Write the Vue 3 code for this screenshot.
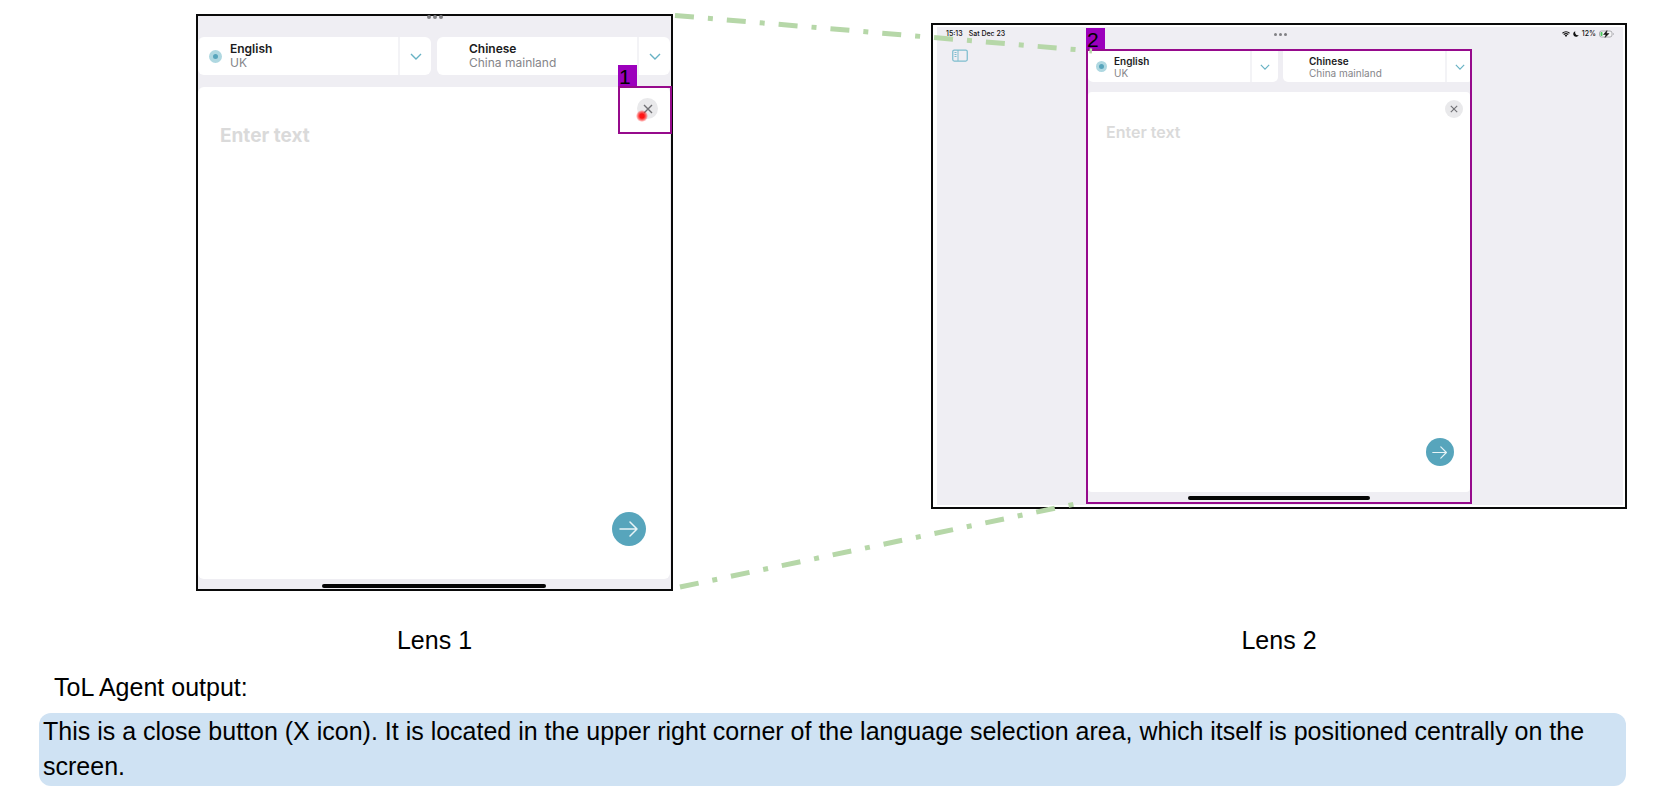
<script setup>
const languages = [
  { name: 'English', region: 'UK', active: true },
  { name: 'Chinese', region: 'China mainland', active: false },
]

const lenses = [
  { id: 1, kind: 'close', caption: 'Lens 1' },
  { id: 2, kind: 'wide', caption: 'Lens 2' },
]
</script>

<template>
  <main class="page">
    <section class="lenses">
      <figure v-for="lens in lenses" :key="lens.id" class="lens" :class="'lens-' + lens.kind">
        <div class="frame">
          <div class="device">
            <header v-if="lens.kind === 'wide'" class="status">
              <div class="status-left"><span>15:13</span><span>Sat Dec 23</span></div>
              <div class="dots"><i></i><i></i><i></i></div>
              <div class="status-right">
                <svg class="wifi" viewBox="0 0 16 12" aria-hidden="true">
                  <path d="M1 4.500C5 .8 11 .8 15 4.500M3.500 7.200c2.600-2.300 6.400-2.300 9 0" fill="none" stroke="#111" stroke-width="2.200" />
                  <path d="M5.500 9.200c1.500-1.300 3.500-1.300 5 0L8 11.800z" fill="#111" />
                </svg>
                <svg class="moon" viewBox="0 0 12 12" aria-hidden="true">
                  <path d="M4.500.5C2 1.500.5 3.600.5 6.200.5 9.300 3 11.600 6 11.600c2.500 0 4.600-1.500 5.500-3.600C7 9.500 3 6 4.500.5z" fill="#111" />
                </svg>
                <span>12%</span>
                <svg class="battery" viewBox="0 0 30 16" aria-hidden="true">
                  <rect x="1" y="2" width="25" height="12" rx="4" fill="#f6f6f8" stroke="#98989c" stroke-width="1.500" />
                  <rect x="3" y="4" width="4" height="8" rx="1.500" fill="#4cc95e" />
                  <path d="M28 6v4c2-1 2-3 0-4z" fill="#98989c" />
                  <path d="M16 1l-7 8h5l-2 6 8-8h-5z" fill="#111" stroke="#111" />
                </svg>
              </div>
            </header>
            <div v-else class="dots"><i></i><i></i><i></i></div>

            <button v-if="lens.kind === 'wide'" class="sidebar" type="button" aria-label="Show sidebar">
              <svg viewBox="0 0 32 26" aria-hidden="true">
                <rect x="1.500" y="2" width="29" height="22" rx="3" fill="none" stroke="#7fbdce" stroke-width="2.500" />
                <path d="M12 2v22M5 7h4M5 11h4M5 15h4" fill="none" stroke="#7fbdce" stroke-width="2" />
              </svg>
            </button>

            <div class="translator">
              <span v-if="lens.kind === 'wide'" class="tag">2</span>
              <div class="content">
                <div class="languages">
                  <div v-for="language in languages" :key="language.name" class="language">
                    <button class="choice" type="button">
                      <span class="radio" :class="{ active: language.active }"></span>
                      <span class="names">
                        <strong>{{ language.name }}</strong>
                        <span>{{ language.region }}</span>
                      </span>
                    </button>
                    <button class="expand" type="button" :aria-label="'Change ' + language.name">
                      <svg viewBox="0 0 12 7" aria-hidden="true">
                        <path d="M1 1l5 5 5-5" fill="none" stroke="#67b2c4" stroke-width="1.400" />
                      </svg>
                    </button>
                  </div>
                </div>

                <div class="panel">
                  <button class="close" type="button" aria-label="Close">
                    <svg viewBox="0 0 10 10" aria-hidden="true">
                      <path d="M1 1l8 8M9 1L1 9" fill="none" stroke="#707074" stroke-width="1.400" />
                    </svg>
                  </button>
                  <textarea class="entry" placeholder="Enter text" aria-label="Enter text"></textarea>
                  <button class="send" type="button" aria-label="Translate">
                    <svg viewBox="0 0 20 16" aria-hidden="true">
                      <path d="M1 8h17M11 1l7 7-7 7" fill="none" stroke="#e8f4f7" stroke-width="1.500" stroke-linecap="round" stroke-linejoin="round" />
                    </svg>
                  </button>
                  <div v-if="lens.kind === 'close'" class="highlight">
                    <span class="tag">1</span>
                    <span class="touch"></span>
                  </div>
                </div>
                <div class="home"></div>
              </div>
            </div>
          </div>
        </div>
        <figcaption>{{ lens.caption }}</figcaption>
      </figure>

      <svg class="links" viewBox="0 0 1661 600" aria-hidden="true">
        <path d="M675 15.500L1092 51" />
        <path d="M680 587L1075 504" />
      </svg>
    </section>

    <section class="output">
      <h2>ToL Agent output:</h2>
      <p>
        This is a close button (X icon). It is located in the upper right corner of the language
        selection area, which itself is positioned centrally on the screen.
      </p>
    </section>
  </main>
</template>

<style>
body {
  margin: 0;
  background: #fff;
}
</style>

<style scoped>
* {
  box-sizing: border-box;
}

.page {
  font-family: "Liberation Sans", Arial, sans-serif;
  font-size: 25px;
  line-height: 28px;
  color: #000;
}

button {
  display: flex;
  align-items: center;
  justify-content: center;
  margin: 0;
  padding: 0;
  border: 0;
  background: none;
  color: inherit;
  font: inherit;
}

svg {
  display: block;
}

.lenses {
  position: relative;
  display: grid;
  grid-template-columns: minmax(0, 196fr) minmax(0, 477fr) minmax(0, 258fr) minmax(0, 696fr) minmax(0, 34fr);
  padding-top: 14px;
}

.lens {
  display: flex;
  flex-direction: column;
  margin: 0;
}

.lens-close {
  grid-column: 2;
}

.lens-wide {
  grid-column: 4;
  padding-top: 9px;
}

figcaption {
  margin-top: auto;
  padding-top: 35px;
  text-align: center;
}

.frame {
  display: flex;
  border: 2px solid #0a0a0a;
  font-family: Inter, "Liberation Sans", sans-serif;
}

.device {
  position: relative;
  flex: 1;
  min-width: 0;
  background: #efeef3;
}

.lens-close .frame {
  aspect-ratio: 477 / 577;
}

.lens-close .device {
  display: grid;
  padding: 21px 1px 1px 0;
}

.lens-wide .frame {
  aspect-ratio: 696 / 486;
  padding: 2px 2px 2px 4px;
}

.lens-wide .device {
  display: grid;
  grid-template-columns: minmax(0, 149fr) minmax(0, 386fr) minmax(0, 151fr);
  grid-template-rows: 22px minmax(0, 1fr);
  padding-bottom: 1px;
}

.status {
  grid-column: 1 / -1;
  display: grid;
  grid-template-columns: 1fr auto 1fr;
  align-items: center;
  height: 14px;
  padding: 0 9px;
  font-size: 7px;
  line-height: 14px;
  font-weight: 500;
  color: #111;
}

.status-left,
.status-right {
  display: flex;
  align-items: center;
}

.status-left {
  gap: 6px;
}

.status-right {
  justify-content: flex-end;
  gap: 3px;
}

.wifi {
  width: 8px;
  height: 6px;
}

.moon {
  width: 6px;
  height: 6px;
}

.battery {
  width: 15px;
  height: 8px;
}

.dots {
  display: flex;
  gap: 2px;
}

.dots i {
  width: 3px;
  height: 3px;
  border-radius: 50%;
  background: #808084;
}

.lens-close .dots {
  position: absolute;
  top: -1px;
  left: 50%;
  transform: translateX(-50%);
}

.lens-close .dots i {
  width: 4px;
  height: 4px;
}

.sidebar {
  justify-self: start;
  align-self: start;
  margin-left: 15px;
}

.sidebar svg {
  width: 16px;
  height: 13px;
}

.translator {
  position: relative;
  display: flex;
  min-width: 0;
}

.lens-wide .translator {
  border: 2px solid #960a8c;
}

.content {
  flex: 1;
  display: flex;
  flex-direction: column;
  min-width: 0;
  overflow: hidden;
}

.lens-close .content {
  overflow: visible;
}

.languages {
  display: grid;
  grid-template-columns: repeat(2, minmax(0, 1fr));
  gap: 6px;
  height: 38px;
  margin-bottom: 12px;
}

.lens-wide .languages {
  gap: 5px;
  height: 31px;
  margin-right: -3px;
  margin-bottom: 10px;
}

.language {
  display: flex;
  border-radius: 6px;
  background: #fff;
  overflow: hidden;
}

.lens-wide .language {
  border-radius: 0 0 5px 5px;
}

.choice {
  flex: 1;
  justify-content: flex-start;
  gap: 8px;
  padding-left: 11px;
  text-align: left;
}

.lens-wide .choice {
  gap: 7px;
  padding-left: 8px;
}

.radio {
  width: 13px;
  height: 13px;
  border-radius: 50%;
}

.lens-wide .radio {
  width: 11px;
  height: 11px;
}

.radio.active {
  border: 4px solid #afd8e1;
  background: #57a5bc;
}

.lens-wide .radio.active {
  border-width: 3px;
}

.names {
  display: flex;
  flex-direction: column;
  font-size: 12px;
  line-height: 14px;
  color: #858589;
}

.lens-wide .names {
  font-size: 10px;
  line-height: 12px;
}

.names strong {
  font-weight: 600;
  color: #1b1b1d;
}

.expand {
  width: 33px;
  border-left: 2px solid #f3f3f6;
}

.lens-wide .expand {
  width: 28px;
}

.expand svg {
  width: 12px;
  height: 7px;
}

.lens-wide .expand svg {
  width: 10px;
  height: 6px;
}

.panel {
  position: relative;
  flex: 1;
  display: flex;
  flex-direction: column;
  align-items: flex-end;
  min-height: 0;
  padding: 11px 12px 33px 22px;
  border-radius: 6px;
  background: #fff;
}

.lens-wide .panel {
  padding: 8px 7px 26px 18px;
  border-radius: 4px;
}

.close {
  width: 21px;
  height: 21px;
  border-radius: 50%;
  background: #e9e9eb;
}

.close svg {
  width: 10px;
  height: 10px;
}

.lens-wide .close {
  width: 18px;
  height: 18px;
}

.lens-wide .close svg {
  width: 8px;
  height: 8px;
}

.entry {
  flex: 1;
  width: 100%;
  min-height: 0;
  margin: 5px 0 0;
  padding: 0;
  border: 0;
  outline: 0;
  resize: none;
  overflow: hidden;
  background: none;
  font-family: inherit;
  font-size: 19px;
  line-height: 24px;
  font-weight: 700;
}

.entry::placeholder {
  color: #dadada;
  opacity: 1;
}

.lens-wide .entry {
  font-size: 16px;
  margin-top: 2px;
  font-weight: 600;
}

.send {
  width: 34px;
  height: 34px;
  margin-right: 12px;
  border-radius: 50%;
  background: #57a5bc;
}

.send svg {
  width: 20px;
  height: 16px;
}

.lens-wide .send {
  width: 28px;
  height: 28px;
  margin-right: 9px;
}

.lens-wide .send svg {
  width: 16px;
  height: 13px;
}

.home {
  align-self: center;
  width: 47.5%;
  height: 4px;
  margin: 5px 0 0;
  border-radius: 2px;
  background: #050505;
}

.lens-wide .home {
  margin: 4px 0 2px;
}

.highlight {
  position: absolute;
  top: -1px;
  right: -2px;
  width: 54px;
  height: 48px;
  border: 2px solid #960a8c;
  pointer-events: none;
}

.tag {
  position: absolute;
  bottom: calc(100% + 2px);
  left: -2px;
  width: 19px;
  height: 21px;
  padding-left: 1px;
  background: #9c00bc;
  font-family: "Liberation Sans", Arial, sans-serif;
  font-size: 21px;
  line-height: 24px;
  color: #000;
}

.touch {
  position: absolute;
  left: 16px;
  top: 22px;
  width: 12px;
  height: 12px;
  border-radius: 50%;
  background: radial-gradient(circle, #ff1414 0 25%, rgba(255, 40, 40, 0.600) 50%, rgba(255, 80, 80, 0) 72%);
}

.links {
  position: absolute;
  top: 0;
  left: 0;
  width: 100%;
  pointer-events: none;
}

.links path {
  fill: none;
  stroke: #b6d7a8;
  stroke-width: 5;
  stroke-dasharray: 19 14 5 14;
}

.output {
  padding: 19px 35px 12px 39px;
}

.output h2 {
  margin: 0 0 12px;
  padding-left: 15px;
  font-size: 25px;
  line-height: 28px;
  font-weight: 400;
}

.output p {
  margin: 0;
  padding: 1px 4px 2px;
  border-radius: 12px;
  background: #cfe2f3;
  line-height: 35px;
}
</style>
